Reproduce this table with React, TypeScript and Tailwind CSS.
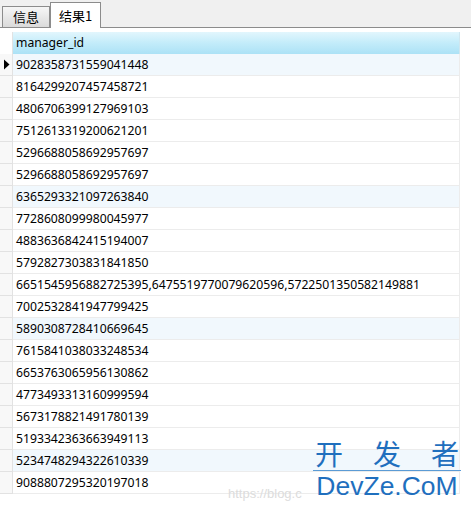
const ROWS = [
  "9028358731559041448",
  "8164299207457458721",
  "4806706399127969103",
  "7512613319200621201",
  "5296688058692957697",
  "5296688058692957697",
  "6365293321097263840",
  "7728608099980045977",
  "4883636842415194007",
  "5792827303831841850",
  "6651545956882725395,6475519770079620596,5722501350582149881",
  "7002532841947799425",
  "5890308728410669645",
  "7615841038033248534",
  "6653763065956130862",
  "4773493313160999594",
  "5673178821491780139",
  "5193342363663949113",
  "5234748294322610339",
  "9088807295320197018",
];

// rows that show the faint blue tint in the grid
const TINTED = [0, 6, 12, 18];

export default function App() {
  return (
    <div className="relative w-[471px] h-[506px] overflow-hidden bg-white font-['Noto_Sans',sans-serif] text-black">
      {/* tab strip */}
      <div className="flex h-[28px] items-end bg-[#f0f0f0]">
        <div className="h-full w-[2px] border-b border-[#8c8c8c]" />
        <div className="flex h-[22px] w-[48px] items-center justify-center border border-[#8c8c8c] bg-gradient-to-b from-[#f6f6f6] to-[#dadada] text-[13px] font-['Noto_Sans_CJK_SC',sans-serif]">
          信息
        </div>
        <div className="flex h-[26px] w-[51px] items-center justify-center border border-b-0 border-[#8c8c8c] bg-white text-[13px] font-['Noto_Sans_CJK_SC',sans-serif]">
          结果1
        </div>
        <div className="h-full flex-1 border-b border-[#8c8c8c]" />
      </div>

      {/* grid */}
      <div className="mt-[4px]">
        <div className="flex h-[22px]">
          <div className="w-[13px] border-r border-[#e2e2e2] bg-white" />
          <div className="w-[447px] border-r border-[#cfe6ef] bg-gradient-to-b from-[#e2f6fd] via-[#c3ecfa] to-[#ace2f6] pl-[3px] text-[12.2px] leading-[22px]">
            manager_id
          </div>
        </div>
        {ROWS.map((v, i) => (
          <div key={i} className="flex h-[22px]">
            <div className="flex w-[13px] items-center justify-center border-r border-b border-[#e2e2e2] bg-[#f8f8f8]">
              {i === 0 && (
                <svg width="7" height="11" viewBox="0 0 7 11">
                  <path d="M1 0.5 L6.5 5.5 L1 10.5 Z" fill="#000" />
                </svg>
              )}
            </div>
            <div
              className={
                TINTED.includes(i)
                  ? "w-[447px] border-r border-b border-[#ececec] bg-[#f1f8fd] pl-[3px] text-[12.2px] leading-[21px] whitespace-nowrap"
                  : "w-[447px] border-r border-b border-[#ececec] bg-white pl-[3px] text-[12.2px] leading-[21px] whitespace-nowrap"
              }
            >
              {v}
            </div>
          </div>
        ))}
      </div>

      {/* watermark */}
      <div className="absolute left-[228px] top-[484px] text-[13px] text-[#dcdcdc] font-['Liberation_Sans',sans-serif]">
        https://blog.c
      </div>
      <div className="absolute left-[313px] top-[436px] flex w-[148px] flex-col items-center text-[#1f6fbe]">
        <div className="flex w-full justify-between border-b border-[#5b9bd5] px-[2px] text-[28px] leading-[34px] font-['Noto_Sans_CJK_SC',sans-serif]">
          <span>开</span>
          <span>发</span>
          <span>者</span>
        </div>
        <div className="text-[26.5px] leading-[30px] font-['Liberation_Sans',sans-serif]">
          DevZe.CoM
        </div>
      </div>
    </div>
  );
}
